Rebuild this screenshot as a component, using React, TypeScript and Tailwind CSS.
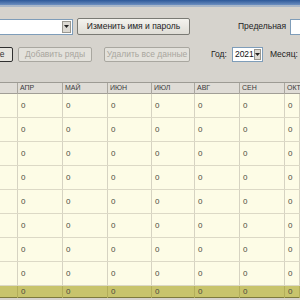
import React from "react";

const months = ["АПР", "МАЙ", "ИЮН", "ИЮЛ", "АВГ", "СЕН", "ОКТ"];
const cols = "grid-cols-[18px_45px_45px_44px_43px_45px_45px_1fr]";

function Row({ kind }: { kind: "data" | "total" }) {
  const cells = ["", ...months.map(() => "0")];
  return (
    <div
      className={`grid ${cols} ${
        kind === "data" ? "h-[24px] bg-[#fdfce6] border-b border-[#dcd9c6]" : "h-[12px] bg-[#c8c46c] border-b border-[#7d7a3c]"
      }`}
    >
      {cells.map((c, i) => (
        <div
          key={i}
          className={`flex items-center pl-[3px] text-[8px] text-[#4a4a40] ${
            kind === "data" ? "border-r border-[#d6d3c2]" : "border-r border-[#b3ae5a]"
          }`}
        >
          {c}
        </div>
      ))}
    </div>
  );
}

export default function App() {
  return (
    <div
      className="w-[300px] h-[300px] overflow-hidden bg-[#d6d3cd] flex flex-col"
      style={{ fontFamily: '"Liberation Sans", Arial, sans-serif' }}
    >
      {/* title bar remnant */}
      <div className="h-[5px] bg-gradient-to-b from-[#2c5899] to-[#6d8fbf] shrink-0" />
      <div className="h-[2px] bg-[#a8b6c8] shrink-0" />

      {/* row 1 */}
      <div className="flex items-center mt-[11px] h-[17px] shrink-0">
        <div className="shrink-0 -ml-px w-[74px] h-[16px] bg-white border border-[#7f9db9] flex items-center justify-end pr-px">
          <div className="w-[9px] h-[12px] bg-[#dcd9d2] border border-[#9a9890] flex items-center justify-center">
            <svg width="5" height="3" viewBox="0 0 5 3">
              <path d="M0 0h5L2.5 3z" fill="#222" />
            </svg>
          </div>
        </div>
        <button className="shrink-0 ml-[4px] w-[113px] h-[17px] bg-gradient-to-b from-[#f4f3ee] to-[#dfddd6] border border-[#7a7a74] rounded-[2px] text-[8.5px] text-[#222] flex items-center justify-center whitespace-nowrap">
          Изменить имя и пароль
        </button>
        <span className="shrink-0 ml-[48px] text-[8.5px] text-[#222] whitespace-nowrap">Предельная</span>
        <div className="shrink-0 ml-[4px] w-[30px] h-[16px] bg-white border border-[#7f9db9]" />
      </div>

      {/* row 2 */}
      <div className="flex items-center mt-[12px] h-[15px] shrink-0">
        <button className="shrink-0 -ml-[48px] w-[61px] h-[15px] bg-[#e6e4de] border border-[#303030] rounded-[2px] text-[8.5px] text-[#333] flex items-center justify-center whitespace-nowrap">
          Подробнее
        </button>
        <button className="shrink-0 ml-[5px] w-[74px] h-[15px] bg-[#e3e1db] border border-[#a9a7a0] rounded-[2px] text-[8.5px] text-[#a9a69e] flex items-center justify-center whitespace-nowrap">
          Добавить ряды
        </button>
        <button className="shrink-0 ml-[12px] w-[86px] h-[15px] bg-[#e3e1db] border border-[#a9a7a0] rounded-[2px] text-[8.5px] text-[#a9a69e] flex items-center justify-center whitespace-nowrap">
          Удалить все данные
        </button>
        <span className="shrink-0 ml-[21px] text-[8.5px] text-[#222]">Год:</span>
        <div className="shrink-0 ml-[5px] w-[31px] h-[15px] bg-white border border-[#7f9db9] flex items-center justify-between pl-[2px] pr-px">
          <span className="text-[8.5px] text-[#111]">2021</span>
          <div className="w-[8px] h-[11px] bg-[#dcd9d2] border border-[#9a9890] flex items-center justify-center">
            <svg width="5" height="3" viewBox="0 0 5 3">
              <path d="M0 0h5L2.5 3z" fill="#222" />
            </svg>
          </div>
        </div>
        <span className="shrink-0 ml-[7px] text-[8.5px] text-[#222] whitespace-nowrap">Месяц:</span>
      </div>

      {/* grid */}
      <div className="mt-[20px] border-t border-[#9d9b94] shrink-0">
        <div className={`grid ${cols} h-[11px] bg-[#dfdcd6] border-b border-[#a19e96]`}>
          {["", ...months].map((m, i) => (
            <div key={i} className="flex items-center pl-[2px] text-[7px] text-[#3a3a3a] border-r border-[#aaa79f]">
              {m}
            </div>
          ))}
        </div>
        {Array.from({ length: 8 }).map((_, i) => (
          <Row key={i} kind="data" />
        ))}
        <Row kind="total" />
      </div>
    </div>
  );
}
